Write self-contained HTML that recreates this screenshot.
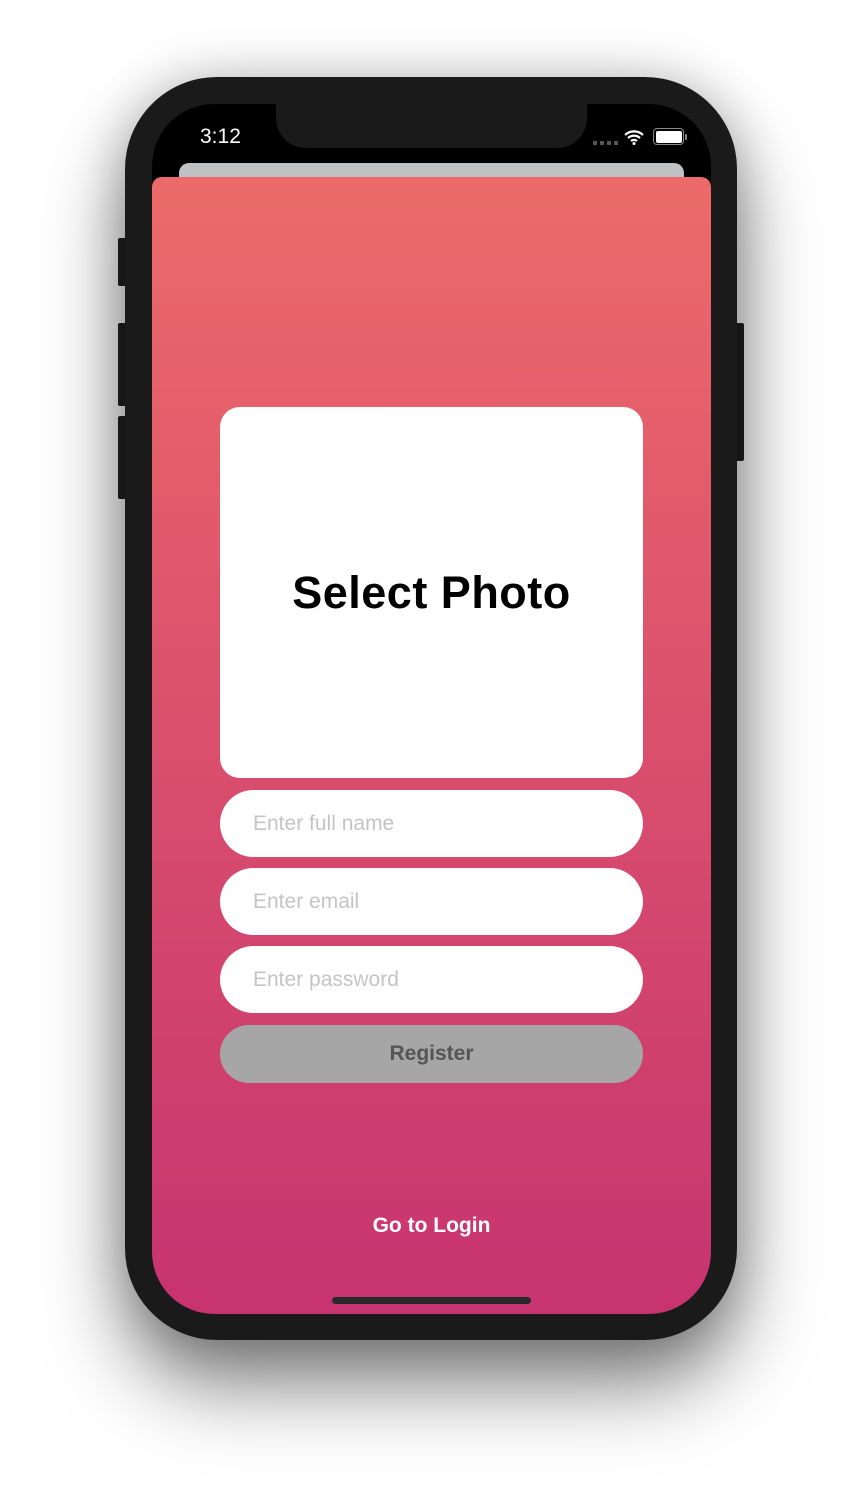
<!DOCTYPE html>
<html><head><meta charset="utf-8"><style>
*{margin:0;padding:0;box-sizing:border-box}
body{width:862px;height:1490px;background:#fff;position:relative;overflow:hidden;font-family:"Liberation Sans",sans-serif}
.abs{position:absolute}
.phone{left:125px;top:77px;width:612px;height:1263px;background:#1a1a1a;border-radius:92px;box-shadow:0 45px 80px rgba(0,0,0,.5),0 0 50px rgba(0,0,0,.2)}
.screen{left:152px;top:104px;width:559px;height:1210px;background:#000;border-radius:62px;overflow:hidden}
.notch{left:124px;top:-2px;width:311px;height:46px;background:#1a1a1a;border-radius:0 0 30px 30px}
.btn{background:#222;border-radius:2px}
.sheet{left:0;top:73px;width:559px;height:1137px;border-radius:10px 10px 0 0;background:linear-gradient(#ec6b6a,#c7336f)}
.field{left:68px;width:423px;height:67px;background:#fff;border-radius:34px;color:#c4c4c8;font-size:21px;padding-left:33px;line-height:67px}
</style></head><body>
<div class="abs btn" style="left:118px;top:238px;width:8px;height:48px"></div>
<div class="abs btn" style="left:118px;top:323px;width:8px;height:83px"></div>
<div class="abs btn" style="left:118px;top:416px;width:8px;height:83px"></div>
<div class="abs btn" style="left:736px;top:323px;width:8px;height:138px"></div>
<div class="abs phone"></div>
<div class="abs screen">
  <div class="abs notch"></div>
  <div class="abs" style="left:48px;top:21px;color:#fff;font-size:21px">3:12</div>
  <div class="abs" style="left:441px;top:37px;width:26px;height:4px;background:repeating-linear-gradient(90deg,#555 0 4px,transparent 4px 7px)"></div>
  <svg class="abs" style="left:472px;top:25px" width="20" height="16" viewBox="0 0 20 16"><path d="M1 6a13 13 0 0 1 18 0M4 9a9 9 0 0 1 12 0M7 12a4.5 4.5 0 0 1 6 0" stroke="#fff" stroke-width="2.2" fill="none"/><circle cx="10" cy="14.5" r="1.5" fill="#fff"/></svg>
  <div class="abs" style="left:501px;top:24px;width:31px;height:17px;border:1.5px solid #888;border-radius:4px;padding:1.5px"><div style="width:100%;height:100%;background:#fff;border-radius:2px"></div></div>
  <div class="abs" style="left:533px;top:30px;width:2px;height:6px;background:#888;border-radius:1px"></div>
  <div class="abs" style="left:27px;top:59px;width:505px;height:30px;background:#c0c1c3;border-radius:10px"></div>
  <div class="abs sheet">
    <div class="abs" style="left:68px;top:230px;width:423px;height:371px;background:#fff;border-radius:20px;display:flex;align-items:center;justify-content:center;font-weight:bold;font-size:45px;color:#000;letter-spacing:0.5px">Select Photo</div>
    <div class="abs field" style="top:613px">Enter full name</div>
    <div class="abs field" style="top:691px">Enter email</div>
    <div class="abs field" style="top:769px">Enter password</div>
    <div class="abs" style="left:68px;top:848px;width:423px;height:58px;background:#a6a6a6;border-radius:29px;text-align:center;line-height:58px;color:#555;font-weight:bold;font-size:21px">Register</div>
    <div class="abs" style="left:0;top:1037px;width:559px;text-align:center;color:#fff;font-weight:bold;font-size:21px">Go to Login</div>
    <div class="abs" style="left:180px;top:1120px;width:199px;height:7px;background:#2a2a2a;border-radius:4px"></div>
  </div>
</div>
</body></html>
